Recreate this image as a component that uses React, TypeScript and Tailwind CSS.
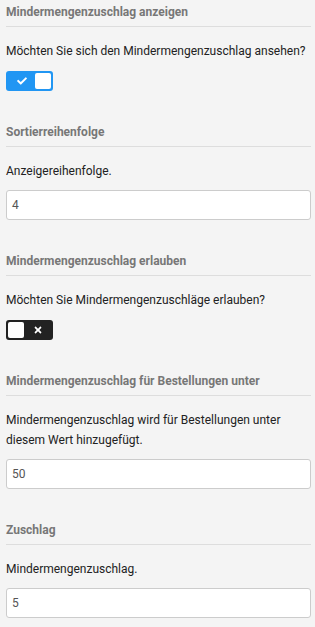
import { FaCheck, FaTimes } from 'react-icons/fa';

interface ToggleProps {
    on: boolean;
}

function Toggle({ on }: ToggleProps) {
    return (
        <div
            className={`flex h-[20px] w-[47px] items-center rounded-[3px] p-[2px] ${
                on ? 'flex-row bg-[#2196f3]' : 'flex-row-reverse bg-[#222222]'
            }`}
        >
            <div className="flex flex-1 items-center justify-center text-white">
                {on ? <FaCheck size={10} /> : <FaTimes size={10} />}
            </div>
            <div className="h-[16px] w-[16px] rounded-[2px] bg-white" />
        </div>
    );
}

interface SectionProps {
    title: string;
    text: string;
    first?: boolean;
    children: React.ReactNode;
}

function Section({ title, text, first, children }: SectionProps) {
    return (
        <div className={first ? 'pt-[4px]' : 'pt-[33px]'}>
            <h3 className="border-b border-[#dddddd] pb-[6px] text-[12px] leading-[16px] font-bold text-[#777777]">
                {title}
            </h3>
            <p className="mt-[14px] text-[12px] leading-[20px] text-[#222222]">{text}</p>
            {children}
        </div>
    );
}

function NumberInput({ value }: { value: string }) {
    return (
        <div className="mt-[9px] flex h-[30px] items-center rounded-[3px] border border-[#cccccc] bg-white px-[5px] text-[12px] text-[#555555]">
            {value}
        </div>
    );
}

export default function App() {
    return (
        <div
            className="min-h-screen bg-[#f4f4f4] pr-[4px] pl-[6px]"
            style={{ fontFamily: 'Roboto, "Liberation Sans", sans-serif' }}
        >
            <Section
                first
                title="Mindermengenzuschlag anzeigen"
                text="Möchten Sie sich den Mindermengenzuschlag ansehen?"
            >
                <div className="mt-[10px]">
                    <Toggle on />
                </div>
            </Section>
            <Section title="Sortierreihenfolge" text="Anzeigereihenfolge.">
                <NumberInput value="4" />
            </Section>
            <Section
                title="Mindermengenzuschlag erlauben"
                text="Möchten Sie Mindermengenzuschläge erlauben?"
            >
                <div className="mt-[10px]">
                    <Toggle on={false} />
                </div>
            </Section>
            <Section
                title="Mindermengenzuschlag für Bestellungen unter"
                text="Mindermengenzuschlag wird für Bestellungen unter diesem Wert hinzugefügt."
            >
                <NumberInput value="50" />
            </Section>
            <Section title="Zuschlag" text="Mindermengenzuschlag.">
                <NumberInput value="5" />
            </Section>
        </div>
    );
}
